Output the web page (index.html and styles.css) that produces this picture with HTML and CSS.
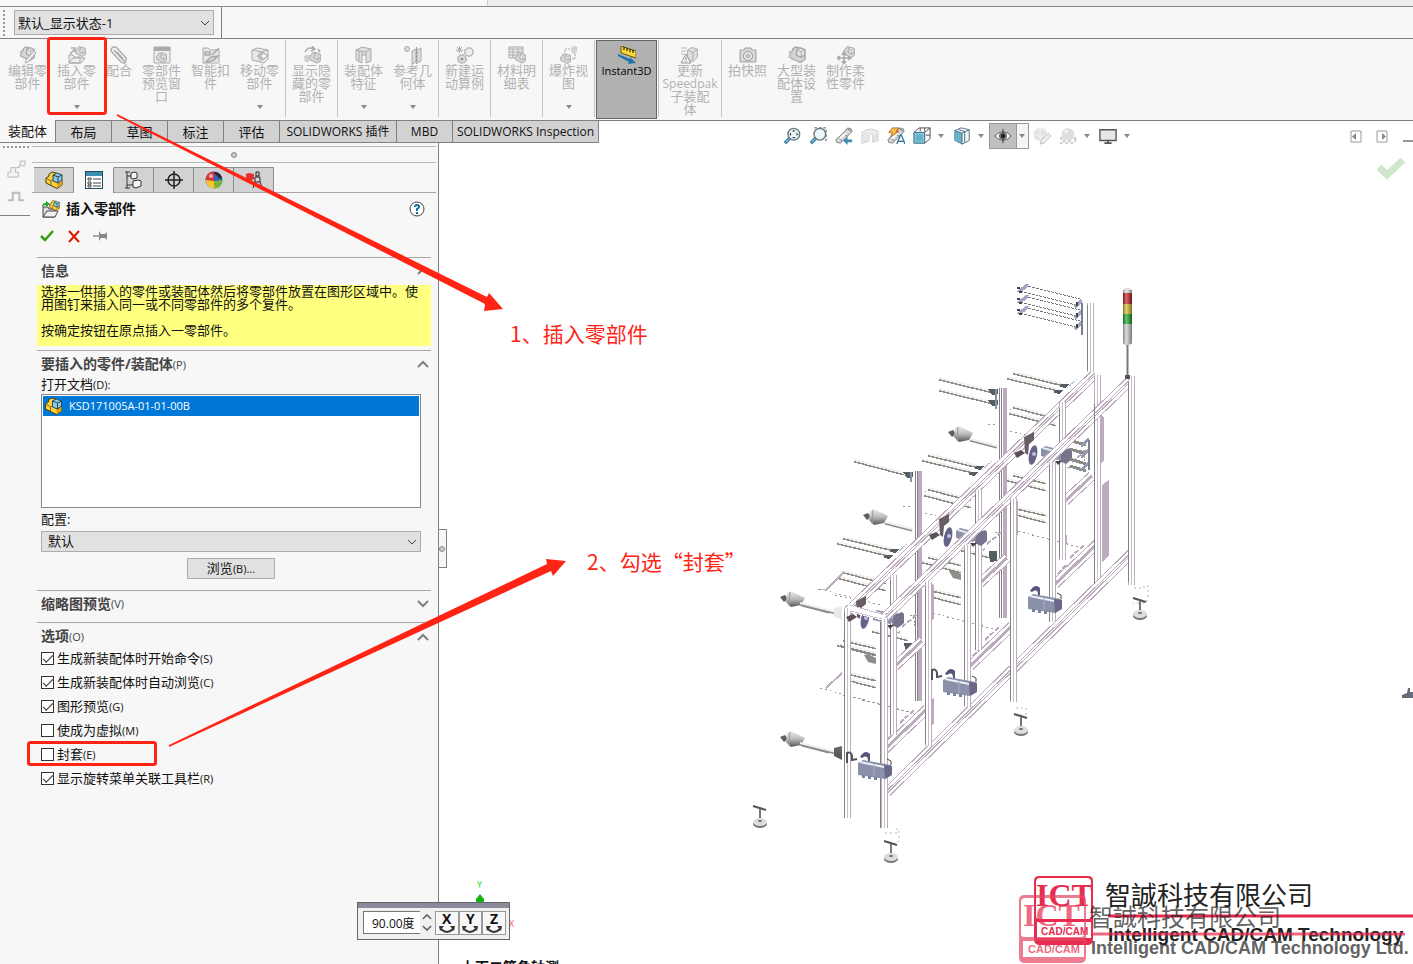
FILE: index.html
```html
<!DOCTYPE html>
<html lang="zh-CN">
<head>
<meta charset="utf-8">
<title>插入零部件</title>
<link rel="stylesheet" href="styles.css">
</head>
<body>
<svg class="defs" width="0" height="0" aria-hidden="true">
  <defs>
    <symbol id="i-part" viewBox="0 0 18 18"><path d="M1 7l3-2V3l3-2 4 1v8l6-1v5l-5 3.500L1 12z" fill="#ffd23c" stroke="#4b3a10"/><path d="M12 12.500l5-3V14l-5 3z" fill="#e0a010"/><path d="M1 7l5 3v4M6 10l3-2" fill="none" stroke="#8a6a10"/><path d="M8 4l4-2 5 2v5l-4 3-5-2z" fill="#8fc8e0" stroke="#1f4a5c"/><path d="M8 4l5 2 4-2M13 6v6" fill="none" stroke="#1f4a5c"/></symbol>
    <symbol id="g-cube" viewBox="0 0 18 18"><path d="M4 4l5-3 6 2v9l-5 5-6-3z" fill="#dedede" stroke="#a9a9a9"/><path d="M4 4l6 3 5-4M10 7v10" fill="none" stroke="#a9a9a9"/></symbol>
    <symbol id="g-part" viewBox="0 0 18 18"><path d="M1 7l3-2V3l3-2 4 1v8l6-1v5l-5 3.500L1 12z" fill="#d6d6d6" stroke="#a8a8a8" stroke-width="1.500"/><path d="M8 4l4-2 5 2v5l-4 3-5-2z" fill="#e4e4e4" stroke="#a8a8a8" stroke-width="1.500"/><path d="M8 4l5 2 4-2M13 6v6" fill="none" stroke="#b0b0b0"/></symbol>
    <symbol id="i-lens" viewBox="0 0 20 20"><path d="M2 18l6-6" stroke="#4688a4" stroke-width="4"/><path d="M3 17l4-4" stroke="#9bd0e4" stroke-width="1"/><circle cx="12" cy="8" r="6.500" fill="#edf6f9" stroke="#68787e" stroke-width="1.500"/></symbol>
    <symbol id="i-scope" viewBox="0 0 20 20"><path d="M1 14l8-7 5-6 4 1 1 3-5 5-8 8-4-1z" fill="#d8d8d8" stroke="#777"/><path d="M9 7l5 4M4 12l4 4M14 2l4 3" stroke="#666"/><path d="M5 13l7-6" stroke="#fff" stroke-width="2"/></symbol>
    <symbol id="i-down" viewBox="0 0 6 4"><path d="M0 0h6L3 4z" fill="#8a8a8a"/></symbol>
    <symbol id="i-chev" viewBox="0 0 12 8"><path d="M1 1l5 5 5-5" fill="none" stroke="currentColor" stroke-width="2"/></symbol>
    <symbol id="i-turn" viewBox="0 0 18 9"><path d="M3 4q6 6 12 0" fill="none" stroke="#333" stroke-width="2"/><path d="M1 1h5L2 6zM17 1h-5l4 5z" fill="#333"/></symbol>
  </defs>
</svg>

<div class="app">
  <div class="strip"></div>
  <div class="statebar">
    <span class="grip-v"></span>
    <span class="pick state-pick"><select aria-label="显示状态"><option>默认_显示状态-1</option></select><svg class="pick-arrow" viewBox="0 0 10 6"><path d="M1 1l4 4 4-4" fill="none" stroke="#444"/></svg></span>
  </div>

  <div class="ribbon">
    <button class="cmd"><svg class="ico" viewBox="0 0 18 18"><use href="#g-part" width="17" height="15"/><path d="M15 5l2 2-8 9-3 1 1-3z" fill="#eee" stroke="#aaa"/></svg><span>编辑零<br>部件</span></button>
    <button class="cmd"><svg class="ico" viewBox="0 0 18 18"><use href="#g-part" x="7" width="11" height="11"/><path d="M1 17V9h4l1 2h6v6zM1 17l4-5h12l-4 5z" fill="#eee" stroke="#aaa"/><path d="M2 8l5-5M3 2h4v4" fill="none" stroke="#aaa" stroke-width="1.500"/></svg><span>插入零<br>部件</span><svg class="drop"><use href="#i-down"/></svg></button>
    <button class="cmd narrow"><svg class="ico" viewBox="0 0 18 18"><path d="M4 4l9 10q2 2 3 0t-1-3L7 2Q4 0 2 2t0 4l9 10q3 2 5 0M7 6l6 7" fill="none" stroke="#aaa" stroke-width="1.500"/></svg><span>配合</span></button>
    <button class="cmd"><svg class="ico" viewBox="0 0 18 18"><path d="M1 1h16v16H1z" fill="#eee" stroke="#aaa"/><path d="M1 2h16M1 4h16" stroke="#aaa" stroke-width="2"/><use href="#g-part" x="3" y="6" width="11" height="11"/></svg><span>零部件<br>预览窗<br>口</span></button>
    <button class="cmd"><svg class="ico" viewBox="0 0 18 18"><path d="M1 17V2h5l2 2h9v13z" fill="#e8e8e8" stroke="#aaa"/><path d="M3 6h5v3H3zM4 16l5-5 7-1-4 4-6 2zM10 9l7-7" fill="#ddd" stroke="#aaa" stroke-width="1.500"/></svg><span>智能扣<br>件</span></button>
    <button class="cmd"><svg class="ico" viewBox="0 0 18 18"><path d="M1 4l5-2 11 2v9l-4 4-12-3z" fill="#e8e8e8" stroke="#aaa"/><path d="M1 4l10 2 6-2M9 6v9" fill="none" stroke="#aaa"/><path d="M7 9h4V6l6 4-6 4v-3H7z" fill="#f7f7f7" stroke="#999"/></svg><span>移动零<br>部件</span><svg class="drop"><use href="#i-down"/></svg></button>
    <i class="sep"></i>
    <button class="cmd"><svg class="ico" viewBox="0 0 18 18"><use href="#g-part" x="6" y="5" width="12" height="13"/><use href="#g-cube" x="0" y="8" width="8" height="9"/><path d="M2 6q3-6 9-3M9 0l3 3-4 2M15 3l2 3" fill="none" stroke="#aaa" stroke-width="1.500"/></svg><span>显示隐<br>藏的零<br>部件</span></button>
    <i class="sep"></i>
    <button class="cmd"><svg class="ico" viewBox="0 0 18 18"><path d="M1 4l6-3 9 2v12l-5 2V9H7v8l-6-3z" fill="#dedede" stroke="#aaa"/><path d="M1 4l9 2 6-3M7 9V6M11 9V6M4 5v10" fill="none" stroke="#aaa"/></svg><span>装配体<br>特征</span><svg class="drop"><use href="#i-down"/></svg></button>
    <button class="cmd"><svg class="ico" viewBox="0 0 18 18"><circle cx="3" cy="3" r="2.500" fill="#ddd" stroke="#aaa"/><path d="M8 5l4-2v13l-4 2zM13 4l4-2v13l-4 2z" fill="#ddd" stroke="#aaa"/><path d="M12.500 1v17" stroke="#999" stroke-dasharray="3 1"/></svg><span>参考几<br>何体</span><svg class="drop"><use href="#i-down"/></svg></button>
    <i class="sep"></i>
    <button class="cmd"><svg class="ico" viewBox="0 0 18 18"><circle cx="13" cy="6" r="4" fill="#eee" stroke="#bbb"/><circle cx="13" cy="6" r="4.500" fill="none" stroke="#aaa" stroke-dasharray="2 1"/><circle cx="6" cy="13" r="4" fill="#ddd" stroke="#bbb"/><circle cx="6" cy="13" r="4.500" fill="none" stroke="#aaa" stroke-dasharray="2 1"/><circle cx="6" cy="13" r="1.500" fill="#999"/><path d="M0 4h7M3.500 0v7M1 1l5 5M6 1L1 6" stroke="#aaa"/></svg><span>新建运<br>动算例</span></button>
    <i class="sep"></i>
    <button class="cmd"><svg class="ico" viewBox="0 0 18 18"><path d="M1 1h14v11H1z" fill="#eee" stroke="#aaa"/><path d="M1 3h14M1 6h14M1 9h14M5 3v9M10 3v9" stroke="#aaa"/><use href="#g-part" x="7" y="6" width="11" height="12"/></svg><span>材料明<br>细表</span></button>
    <i class="sep"></i>
    <button class="cmd"><svg class="ico" viewBox="0 0 18 18"><use href="#g-part" x="0" y="7" width="11" height="11"/><use href="#g-cube" x="10" width="8" height="8"/><path d="M5 6V3h5M15 8v5h-3" fill="none" stroke="#aaa" stroke-dasharray="2 1"/></svg><span>爆炸视<br>图</span><svg class="drop"><use href="#i-down"/></svg></button>
    <i class="sep"></i>
    <button class="cmd instant"><svg class="ico" viewBox="0 0 18 18"><path d="M3 0l15 5v7L3 7z" fill="#ffd83a" stroke="#6b5710"/><path d="M6 1v3M9 2v3M12 3v3M15 4v3" stroke="#000"/><path d="M0 8l12 5v-2l6 6-8 1 1-2L0 10z" fill="#1e74a8"/></svg><span>Instant3D</span></button>
    <i class="sep"></i>
    <button class="cmd wide"><svg class="ico" viewBox="0 0 18 18"><use href="#g-cube" x="3" width="16" height="17"/><path d="M0 2h6M0 5h5M0 8h4" stroke="#bbb"/><path d="M5 8l5 9H0z" fill="#eee" stroke="#999"/><path d="M5 11v3M5 15v1" stroke="#888"/></svg><span>更新<br><em>Speedpak</em><br>子装配<br>体</span></button>
    <i class="sep"></i>
    <button class="cmd"><svg class="ico" viewBox="0 0 18 18"><path d="M1 4h4l1-2h6l1 2h4v12H1z" fill="#d8d8d8" stroke="#a0a0a0"/><circle cx="9" cy="10" r="4.500" fill="#eee" stroke="#999"/><circle cx="9" cy="10" r="2" fill="#ccc" stroke="#aaa"/></svg><span>拍快照</span></button>
    <button class="cmd"><svg class="ico" viewBox="0 0 18 18"><use href="#g-part" x="1" width="17" height="17"/><path d="M0 5h5M1 8h7M0 11h7M3 14h6" stroke="#ccc"/></svg><span>大型装<br>配体设<br>置</span></button>
    <button class="cmd"><svg class="ico" viewBox="0 0 18 18"><use href="#g-part" x="6" width="12" height="12"/><path d="M7 7v10M1 12h12M5 9l2-3 2 3M5 15l2 3 2-3M3 10l-3 2 3 2M11 10l3 2-3 2" fill="none" stroke="#aaa" stroke-width="1.500"/></svg><span>制作柔<br>性零件</span></button>
  </div>

  <div class="tabrow">
    <nav class="tabs">
      <button class="tab active">装配体</button><button class="tab">布局</button><button class="tab">草图</button><button class="tab">标注</button><button class="tab">评估</button><button class="tab t-addin">SOLIDWORKS 插件</button><button class="tab">MBD</button><button class="tab t-insp">SOLIDWORKS Inspection</button>
    </nav>
    <div class="hud">
      <button class="hb" aria-label="整屏显示全图"><svg viewBox="0 0 20 20"><use href="#i-lens"/><path d="M12 3l2 2h-4zM12 13l2-2h-4zM7 8l2-2v4zM17 8l-2-2v4z" fill="#444"/></svg></button>
      <button class="hb" aria-label="局部放大"><svg viewBox="0 0 20 20"><path d="M6 1h13v14h-3" fill="none" stroke="#444" stroke-dasharray="3 2"/><use href="#i-lens"/></svg></button>
      <button class="hb" aria-label="上一视图"><svg viewBox="0 0 20 20"><use href="#i-scope"/><path d="M9 15l5-4v3h5v3h-5v3z" fill="#3d8bb0"/></svg></button>
      <button class="hb" aria-label="剖面视图"><svg viewBox="0 0 20 20"><path d="M1 6q9-7 18-1v10l-6 2V8q-2-1-4 1v7l-8 2z" fill="#eee" stroke="#ccc"/><path d="M2 10l5-4M2 14l5-5M3 17l5-5M14 12l4-4M14 15l4-4" stroke="#ccc"/></svg></button>
      <button class="hb" aria-label="动态注解视图"><svg viewBox="0 0 20 20"><use href="#i-scope"/><path d="M6 1h7l-3 4h3L4 11l2-5H2z" fill="#f5c04a" stroke="#b76424"/><path d="M11 19l4-10h1l4 10M12 16h6" fill="none" stroke="#2f7396" stroke-width="1.500"/></svg></button>
      <button class="hb" aria-label="视图定向"><svg viewBox="0 0 20 20"><path d="M1 6l6-5h12v12l-6 5" fill="#fff" stroke="#444"/><path d="M8 1v4M13 6l6-5M13 5V1M14 9h5" stroke="#444"/><path d="M1 6h12v12H1z" fill="#8ec9e0" stroke="#285d74"/><path d="M3 8h8v8H3z" fill="#69b0cd"/></svg></button>
      <svg class="hd"><use href="#i-down"/></svg>
      <button class="hb" aria-label="显示样式"><svg viewBox="0 0 20 20"><path d="M2 4l7-3 9 2v12l-8 4-8-4z" fill="#f2f8fa" stroke="#567"/><path d="M2 4l8 3v12l-8-4z" fill="#69b0cd"/><path d="M2 4l8 3 8-4M10 7v12M6 3l7 2v12" fill="none" stroke="#3c6878"/></svg></button>
      <svg class="hd"><use href="#i-down"/></svg>
      <span class="eye"><button class="hb" aria-label="隐藏/显示项目"><svg viewBox="0 0 20 20"><path d="M1 10q9-10 18 0-9 10-18 0z" fill="#fff" stroke="#555"/><circle cx="10" cy="10" r="4.500" fill="#777"/><circle cx="10" cy="10" r="2.500" fill="#222"/><path d="M10 2v16" stroke="#333"/></svg></button><svg class="hd eye-drop"><use href="#i-down"/></svg></span>
      <button class="hb" aria-label="编辑外观"><svg viewBox="0 0 20 20"><circle cx="8" cy="8" r="7.500" fill="#e2e2e2"/><path d="M3 4q5-4 9 0M1 8q7 5 14 0M8 1v14" fill="none" stroke="#f6f6f6"/><path d="M17 7l3 3-8 8-4 1 1-4z" fill="#eee" stroke="#bbb"/></svg></button>
      <button class="hb" aria-label="应用布景"><svg viewBox="0 0 20 20"><path d="M1 11h3v3H1zM7 11h3v3H7zM16 11h3v3h-3zM4 14h3v3H4zM10 14h3v3h-3zM1 17h3v2H1zM7 17h3v2H7zM13 17h3v2h-3zM17 14h2v3h-2z" fill="#ccc"/><circle cx="10" cy="8" r="7" fill="#dedede"/><circle cx="8" cy="5" r="2" fill="#f2f2f2"/></svg></button>
      <svg class="hd"><use href="#i-down"/></svg>
      <button class="hb" aria-label="视图设定"><svg viewBox="0 0 20 20"><path d="M1 3h18v12H1z" fill="#e6e6e6" stroke="#555" stroke-width="1.500"/><path d="M10 15v3M6 18h8" stroke="#555" stroke-width="2"/></svg></button>
      <svg class="hd"><use href="#i-down"/></svg>
    </div>
    <div class="winbtns">
      <button aria-label="左窗格"><svg viewBox="0 0 12 13"><path d="M1 1h10v11H1z" fill="#fff" stroke="#999"/><path d="M6 3v7L2 6.500z" fill="#888"/></svg></button>
      <button aria-label="右窗格"><svg viewBox="0 0 12 13"><path d="M1 1h10v11H1z" fill="#fff" stroke="#999"/><path d="M6 3v7l4-3.500z" fill="#888"/></svg></button>
      <button aria-label="最小化"><svg viewBox="0 0 12 13"><path d="M1 11h11" stroke="#999" stroke-width="2"/></svg></button>
    </div>
  </div>

  <div class="work">
    <aside class="side">
      <span class="grip-h"></span>
      <svg class="side-ico" viewBox="0 0 20 20"><path d="M1 18v-5h3V8h5v5h3v5zM9 8h4V5M14 1h5v5h-5z" fill="#f3f3f3" stroke="#bbb"/></svg>
      <svg class="side-ico" viewBox="0 0 20 20"><path d="M1 14h5V6h7v8h5" fill="none" stroke="#bbb" stroke-width="2"/></svg>
    </aside>

    <section class="manager">
      <div class="splitter"><i></i></div>
      <div class="mtabs">
        <button class="mtab" aria-label="设计树"><svg viewBox="0 0 18 18"><use href="#i-part"/></svg></button>
        <button class="mtab on" aria-label="属性"><svg viewBox="0 0 18 18"><path d="M0 0h18v18H0z" fill="#fff" stroke="#244c60" stroke-width="2"/><path d="M1 1h16v4H1z" fill="#3b90b4"/><path d="M3 7h3v2H3zM3 11h3v2H3zM3 14h3v2H3z" fill="none" stroke="#444"/><path d="M8 8h8M8 12h8M8 15h8" stroke="#444"/></svg></button>
        <button class="mtab" aria-label="配置"><svg viewBox="0 0 18 18"><path d="M2 1v16M0 1h5M0 17h5M2 5h6M2 14h6" fill="none" stroke="#333"/><path d="M6 2l4-1 2 1v5l-4 1-2-1zM8 10l5-1 3 1v5l-5 2-3-1z" fill="#f5f5f5" stroke="#333"/></svg></button>
        <button class="mtab" aria-label="尺寸专家"><svg viewBox="0 0 18 18"><circle cx="9" cy="9" r="6" fill="none" stroke="#222" stroke-width="1.500"/><path d="M9 0v18M0 9h18" stroke="#222" stroke-width="1.500"/></svg></button>
        <button class="mtab" aria-label="外观"><svg viewBox="0 0 18 18"><circle cx="9" cy="9" r="8.500" fill="#2d63b8"/><path d="M9 10V.5Q1 1 .5 9z" fill="#d33"/><path d="M.5 9L9 10l1 7.500Q2 18 .5 9z" fill="#f6c62a"/><path d="M9 10l8.500-1q0 7-7.500 8.500z" fill="#79b43c"/><path d="M9 1q7 0 8 7l-3-1-5-5z" fill="#3a2020"/><circle cx="6" cy="5" r="2" fill="#fff" opacity=".6"/></svg></button>
        <button class="mtab" aria-label="检查"><svg viewBox="0 0 18 18"><path d="M1 3l3-1 5 1v5l-3 2-5-3z" fill="#e23030"/><path d="M11 1h3v4h-3zM10 6h5v5l2 5M10 6v5l-2 6M10 11h5" fill="none" stroke="#222"/></svg></button>
      </div>
      <div class="pm">
        <header class="title">
          <svg class="title-ico" viewBox="0 0 18 18"><path d="M1 17V7h5l1 2h6v8z" fill="#ddd" stroke="#444"/><use href="#i-part" x="7" width="11" height="11"/><path d="M1 17l4-6h11l-3 6z" fill="#f1f1f1" stroke="#444"/><path d="M0 7q0-4 4-4V1l4 3-4 3V5q-2 0-4 2z" fill="#23a127"/></svg>
          <h1>插入零部件</h1>
          <button class="help" aria-label="帮助"><svg viewBox="0 0 16 16"><circle cx="8" cy="8" r="7" fill="#fff" stroke="#444"/><path d="M6 6q0-2 2-2t2 2q0 1-2 2v2M8 11v2" fill="none" stroke="#17719b" stroke-width="2"/></svg></button>
        </header>
        <div class="confirm">
          <button aria-label="确定"><svg viewBox="0 0 16 16"><path d="M2 8l4 4 8-9" fill="none" stroke="#2f9d12" stroke-width="2.500"/></svg></button>
          <button aria-label="取消"><svg viewBox="0 0 16 16"><path d="M3 3l10 11M13 3L3 14" fill="none" stroke="#dc1a00" stroke-width="2"/></svg></button>
          <button aria-label="保持可见"><svg viewBox="0 0 16 16"><path d="M0 8h7" stroke="#888" stroke-width="1.500"/><path d="M6 3l2 3h4l2-2v8l-2-2H8l-2 3z" fill="#888"/></svg></button>
        </div>

        <section class="group info">
          <h2>信息<svg class="chev up"><use href="#i-chev"/></svg></h2>
          <div class="note"><p>选择一供插入的零件或装配体然后将零部件放置在图形区域中。使用图钉来插入同一或不同零部件的多个复件。</p><p>按确定按钮在原点插入一零部件。</p></div>
        </section>

        <section class="group parts">
          <h2>要插入的零件/装配体<small>(P)</small><svg class="chev up"><use href="#i-chev"/></svg></h2>
          <div class="field">
            <span class="lbl" id="docs">打开文档<small>(D):</small></span>
            <ul class="list" role="listbox" aria-labelledby="docs"><li role="option" aria-selected="true"><svg viewBox="0 0 18 18"><use href="#i-part"/></svg>KSD171005A-01-01-00B</li></ul>
            <label class="lbl conf" for="conf">配置:</label>
            <span class="pick conf-pick"><select id="conf"><option>默认</option></select><svg class="pick-arrow" viewBox="0 0 10 6"><path d="M1 1l4 4 4-4" fill="none" stroke="#444"/></svg></span>
            <button class="browse">浏览<small>(B)...</small></button>
          </div>
        </section>

        <section class="group thumb"><h2>缩略图预览<small>(V)</small><svg class="chev"><use href="#i-chev"/></svg></h2></section>

        <section class="group opts">
          <h2>选项<small>(O)</small><svg class="chev up"><use href="#i-chev"/></svg></h2>
          <label><input type="checkbox" checked><span>生成新装配体时开始命令<small>(S)</small></span></label>
          <label><input type="checkbox" checked><span>生成新装配体时自动浏览<small>(C)</small></span></label>
          <label><input type="checkbox" checked><span>图形预览<small>(G)</small></span></label>
          <label><input type="checkbox"><span>使成为虚拟<small>(M)</small></span></label>
          <label><input type="checkbox"><span>封套<small>(E)</small></span></label>
          <label><input type="checkbox" checked><span>显示旋转菜单关联工具栏<small>(R)</small></span></label>
        </section>
      </div>
    </section>

    <main class="view">
      <svg class="scene" viewBox="439 143 974 821" width="974" height="821">
        <defs>
          <linearGradient id="metal" x1="0" x2="0" y1="0" y2="1"><stop offset="0" stop-color="#eee"/><stop offset=".5" stop-color="#bbb"/><stop offset="1" stop-color="#555"/></linearGradient>
          <linearGradient id="shine" x1="0" x2="1"><stop offset="0" stop-color="#000" stop-opacity=".35"/><stop offset=".35" stop-color="#fff" stop-opacity=".35"/><stop offset="1" stop-color="#000" stop-opacity=".4"/></linearGradient>
          <g id="spool"><path d="M970 440l27 7" class="rodD"/><path d="M970 439l27 7" class="rodL"/><path d="M948 432l5-2 3 4-4 3z" fill="#566065"/><path d="M955 428l4-2 14 7-4 7-10 2-5-5z" fill="url(#metal)"/><path d="M958 427l-1 14" stroke="#999"/></g>
          <g id="rods">
            <path class="rodD" d="M1013 373l50 12M1007 378l50 12M1013 407l43 11M1009 413l47 12M1013 475l33 8M1007 480l39 10M1015 508l31 7M1015 514l31 8"/>
            <path class="rodL" d="M1013 372l50 12M1007 377l50 12M1013 406l43 11M1009 412l47 12M1013 474l33 8M1007 479l39 10M1015 507l31 7M1015 513l31 8"/>
            <path d="M1061 384l8 0-3 4-6-1zM1055 390l8 0-3 4-6-1z" fill="#555f63"/>
            <path d="M1006 414l7-7M988 424h7M1005 430l28 7M1013 530l70 18" stroke="#999" fill="none" stroke-dasharray="2 3"/>
            <path d="M1067 388l10-9" stroke="#acb9dd" stroke-dasharray="2 1"/>
          </g>
          <g id="drive"><path d="M1024 437l10-5v8l-5 4-1 11-3-2z" fill="#685d68"/><path d="M1014 453l7-3 4 3-8 5z" fill="#5b4e58"/><ellipse cx="1033" cy="455" rx="4" ry="10" fill="#66638a" transform="rotate(12 1033 455)"/><circle cx="1034" cy="454" r="2" fill="#bcc0dc"/><path d="M1041 449l4-3 17 4v7l-4 3-17-4z" fill="#8c91aa"/><path d="M1043 448l18 5" stroke="#e3e8f8" stroke-width="2"/><path d="M1062 451l8-3 2 2v9l-6 5-6-3z" fill="#77738f"/><path d="M1055 461l7 0-4 4z" fill="#444"/></g>
          <g id="motor"><path d="M1030 591q5-8 10-3v7h-2q0-7-6-3z" fill="#56557c"/><path d="M1028 597l5-3 28 5v10l-6 4-27-4z" fill="#8c91aa"/><path d="M1030 595l24 5v2l-24-5z" fill="#eef2fa"/><path d="M1044 598v12" stroke="#a9aec4"/><path d="M1054 599l8 1v9l-7 4z" fill="#6b6788"/><path d="M1032 609h3v3h-3zM1038 610h3v3h-3zM1044 611h3v3h-3z" fill="#7d829b"/><path d="M1057 593l4 2v4" stroke="#444" fill="none"/></g>
          <path id="inner-path" d="M1065 501l27-25M1055 584l42-40"/>
          <g id="inner"><use href="#inner-path" class="b1"/><use href="#inner-path" class="b2"/><use href="#inner-path" class="b3"/><path d="M1062 472l8-5M1072 462l16-13M1070 558l15-14M1058 574l8-9" class="lav" stroke-dasharray="5 2"/><path d="M1061 540l6-6v10l-6 5z" fill="#bcaabd"/><path d="M1070 455v6M1080 450h6M1084 456v6" stroke="#999" stroke-dasharray="2 1"/></g>
          <g id="rack"><path d="M1020 291l56 14M1028 286l52 13" stroke="#777" stroke-dasharray="3 1"/><path d="M1018 290l8-6 3 0-2 4-6 4-4 0zM1073 306l8-8 1 4-6 6z" fill="#a2a9c4"/><path d="M1017 288h3M1019 292h3M1077 302v4" stroke="#444" stroke-width="2"/></g>
          <g id="foot"><path d="M0-16l13 4" stroke="#555" stroke-width="2"/><path d="M7-13v12" stroke="#777" stroke-width="2"/><ellipse cx="7" cy="2" rx="7" ry="4" fill="#777"/><ellipse cx="7" cy="0" rx="7" ry="4" fill="#ddd"/><ellipse cx="7" cy="-1" rx="2" ry="1" fill="#666"/></g>
          <path id="back-rail" d="M848 611L1095 374"/>
          <path id="back-post" d="M847.500 608V818M893.500 575V735M978.500 490V650M1062.500 402V560M1090.500 303V372M1097.500 375V585"/>
          <path id="front-rail" d="M884 618L1131 380M887 792L1131 554"/>
          <path id="front-post" d="M884.500 618V828M928.500 582V746M967.500 545V707M1013.500 498V702M1052.500 462V622M1131.500 376V585"/>
          <path id="tall" d="M917.500 470V702M1002.500 387V620"/>
        </defs>
        <g class="crisp">
        <use href="#rack"/><use href="#rack" y="11"/><use href="#rack" y="22"/>
        <path d="M1082 303v32" stroke="#77808f" stroke-width="2"/>
        <path class="rodD" d="M939 379l53 13M939 390l53 13M854 461l50 13M957 549l36 9M872 631l36 9"/><path class="rodL" d="M939 378l53 13M939 389l53 13M854 460l50 13M957 548l36 9M872 630l36 9"/>
        <path d="M988 389h10v5l-6 1zM988 400h10v5l-6 1zM903 472h10v5l-6 1zM989 551h8v10l-7 1zM904 643h8v5l-7 1z" fill="#555f63"/><path d="M996 389v20M911 472v10" stroke="#8891a5" stroke-width="2"/>
        <use href="#rods"/><use href="#rods" x="-85" y="82"/><use href="#rods" x="-170" y="165"/>
        <path d="M826 590l18-18M826 688l16-15" class="lav"/>
        <path d="M820 589l60 16M820 688l100 27" stroke="#999" stroke-dasharray="2 3"/>
        <path class="rodD" d="M840 645l36 9"/><path class="rodL" d="M840 644l36 9"/>
        </g>
        <path d="M864 655l4-1 8 4v6l-8-2zM949 571l4-1 8 4v6l-8-2z" fill="#8d8d8a"/>
        <use href="#spool"/><use href="#spool" x="-85" y="83"/><use href="#spool" x="-168" y="165"/><use href="#spool" x="-168" y="305"/>
        <path d="M800 604l36 9M800 744l36 9" class="rodD"/><path d="M800 603l36 9M800 743l36 9" class="rodL"/><path d="M834 608l8-2v14l-8-4zM834 748l8-2v14l-8-4z" fill="url(#metal)"/>
        <g class="crisp">
        <path d="M915 470h6v232h-6zM999 387h7v232h-7z" fill="#fff"/><path d="M920 471v230M1005 388v230" class="solid"/><path d="M915.500 471v230M917.500 471v230M999.500 388v230M1001.500 388v230" class="edge"/>
        <use href="#inner"/><use href="#inner" x="-85" y="82"/><use href="#inner" x="-170" y="165"/>
        <path d="M1102 485l7-5v76l-7 6zM1101 415l3 2v44l-3 2zM1015 499l3 2v34l-3 2zM931 583l3 2v34l-3 2zM931 700l3-3v27l-3 2z" fill="#bcaabd"/>
        <use href="#back-rail" class="b1"/><use href="#back-rail" class="b2"/><use href="#back-rail" class="b3"/><use href="#back-rail" class="b4"/>
        <use href="#back-post" class="p1"/><use href="#back-post" class="p2"/><use href="#back-post" class="p3"/>
        <path class="edge" d="M844.500 612v206M890.500 580v155M975.500 494v156M1059.500 408v150M1087.500 305v65"/>
        </g>
        <use href="#drive"/><use href="#drive" x="-85" y="82"/><use href="#drive" x="-168" y="164"/>
        <g class="crisp"><path d="M1072 441l14 4M1070 449l16 5M1070 459l16 5M1070 466l16 5" class="rodD"/><path d="M1081 446l8-7M1081 457l8-7M1081 470l8-7" stroke="#9299b5" stroke-width="3"/><path d="M1089 440v30" stroke="#77808f" stroke-width="2"/></g>
        <g class="crisp">
        <use href="#front-rail" class="b1"/><use href="#front-rail" class="b2"/><use href="#front-rail" class="b3"/><use href="#front-rail" class="b4"/>
        <use href="#front-post" class="p1"/><use href="#front-post" class="p2"/><use href="#front-post" class="p3"/>
        <path class="edge" d="M880.500 622v206M925.500 586v158M964.500 549v156M1010.500 502v198M1049.500 466v156M1128.500 382v200M1094.500 404v180"/>
        <path d="M848 604l38 11-2 6-34-9z" fill="#fff"/><path d="M850 605l34 10M850 611l32 8" stroke="#cbbccd" stroke-dasharray="4 1"/>
        </g>
        <use href="#motor"/><use href="#motor" x="-85" y="83"/><use href="#motor" x="-170" y="166"/>
        <path d="M932 680v-10q4-2 5 3v4l5-1M847 763v-10q4-2 5 3v4l5-1" fill="none" stroke="#56505c" stroke-width="2"/>
        <path d="M1134 588h10v-2h4v14l-4 3h-11M1016 708h10v6l-10 2M885 833h12v-4h2v12l-6 3" fill="none" stroke="#bcaabd" stroke-dasharray="2 3"/>
        <use href="#foot" x="1133" y="614"/><use href="#foot" x="1014" y="730"/><use href="#foot" x="753" y="822"/><use href="#foot" x="884" y="857"/>
        <path d="M1127.500 344v32" stroke="#777" stroke-width="2"/><path d="M1125 375h5v4h-5z" fill="#555"/>
        <path d="M1123 290q4-5 9 0v3h-9z" fill="#ddd"/><path d="M1123 293h9v11h-9z" fill="#c01818"/><path d="M1123 304h9v10h-9z" fill="#d2bd28"/><path d="M1123 314h9v10h-9z" fill="#16a024"/><path d="M1123 324h9v18l-2 3h-5l-2-3z" fill="#ccc"/><path d="M1123 290h9v54h-9z" fill="url(#shine)"/>
        <path d="M1402 695l5-2 1-5h2v4h3v6h-11z" fill="#666c7c"/>
        <path d="M480 894l4 5v5h-8v-5z" fill="#12b312"/>
        <text x="477" y="888" class="axis" fill="#11e011">Y</text><text x="509" y="927" class="axis" fill="#f55">X</text>
      </svg>
      <svg class="accept" viewBox="0 0 30 24"><path d="M3 11l8 8L27 4" fill="none" stroke="#cfe7cb" stroke-width="7"/></svg>
      <button class="handle" aria-label="折叠面板"><i></i></button>
      <div class="viewname">上下二等角轴测</div>
      <svg class="brand" viewBox="1013 870 400 94" width="400" height="94">
        <g><path d="M1039 876h49q5 0 5 5v58q0 6-6 6h-47q-6 0-6-6v-58q0-5 5-5z" fill="#e62c4f"/><path d="M1040 878h47q4 0 4 4v34q0 3-3 3h-49q-3 0-3-3v-34q0-4 4-4z" fill="#fff"/><path d="M1037 922h54v16h-54z" fill="#fff"/><text x="1036" y="906" class="ict">ICT</text><text x="1041" y="935" class="cad">CAD/CAM</text></g>
        <text x="1105" y="905" class="cn1">智誠科技有限公司</text><path d="M1108 916h305" stroke="#e6284c" stroke-width="3"/>
        <text x="1108" y="941" class="en1">Intelligent CAD/CAM Technology</text>
        <g opacity=".7"><path d="M1025 895h56q5 0 5 5v57q0 6-6 6h-55q-6 0-6-6v-57q0-5 6-5zM1025 898q-4 0-4 4v32q0 3 3 3h57q3 0 3-3v-32q0-4-4-4zM1023 941v16h61v-16z" fill="#e84562" fill-rule="evenodd"/><text x="1023" y="926" class="ict">ICT</text><text x="1028" y="953" class="cad cad2">CAD/CAM</text><text x="1089" y="926" class="cn2">智誠科技有限公司</text><path d="M1091 934h314" stroke="#e6284c" stroke-width="3"/><text x="1091" y="954" class="en2">Intelligent CAD/CAM Technology Ltd.</text></g>
      </svg>
    </main>

    <div class="spin">
      <div class="spin-bar"></div>
      <div class="spin-body">
        <input type="text" value="90.00度" aria-label="旋转角度">
        <span class="steps"><button aria-label="增加"><svg class="up" viewBox="0 0 12 8"><use href="#i-chev"/></svg></button><button aria-label="减少"><svg viewBox="0 0 12 8"><use href="#i-chev"/></svg></button></span>
        <button class="axisbtn">X<svg><use href="#i-turn"/></svg></button><button class="axisbtn">Y<svg><use href="#i-turn"/></svg></button><button class="axisbtn">Z<svg><use href="#i-turn"/></svg></button>
      </div>
    </div>
  </div>

  <svg class="marks" viewBox="0 0 760 800" width="760" height="800">
    <rect x="48.500" y="38.500" width="57" height="75" rx="2"/><rect x="28.500" y="742.500" width="127" height="22" rx="2"/>
    <path d="M117 114L487 297 489 293 503 309 484 311 485 304 117 116z"/><path d="M169 745L547 564 546 559 566 561 553 576 551 571 169 747z"/>
    <text x="510" y="342">1、插入零部件</text><text x="587" y="570">2、勾选“封套”</text>
  </svg>
</div>
</body>
</html>
```
FILE: styles.css
```css
* { box-sizing: border-box; }
body { margin: 0; background: #f7f7f7; color: #111; font: 13px/16px "Open Sans", "Noto Sans CJK SC", sans-serif; }
button, input, select { font: inherit; color: inherit; }
button { background: none; border: 0; padding: 0; }
small { font-size: 11px; font-weight: 400; }
em { font-style: normal; font-size: 12px; }
h1, h2, p, ul { margin: 0; padding: 0; }
svg { display: block; }
.defs { position: absolute; }
.app { position: relative; display: flex; flex-direction: column; min-height: 100vh; overflow: hidden; }

.strip { height: 7px; border-bottom: 1px solid #8a8a8a; background: linear-gradient(90deg, #f7f7f7 487px, #ccc 487px, #ccc 488px, #ededed 488px); }
.statebar { display: flex; align-items: center; height: 32px; border-bottom: 1px solid #808080; padding-left: 3px; }
.grip-v { width: 4px; height: 26px; background: repeating-linear-gradient(#999 0 2px, transparent 2px 4px) 0 0 / 2px 100% no-repeat; }
.pick { position: relative; display: block; }
.pick select { display: block; width: 100%; height: 100%; appearance: none; border: 1px solid #adadad; border-radius: 0; background: #e1e1e1; padding: 0 3px; }
.pick-arrow { position: absolute; right: 4px; top: 50%; width: 10px; height: 6px; margin-top: -3px; pointer-events: none; }
.state-pick { width: 200px; height: 25px; margin-left: 7px; }
.statebar::after { content: ""; align-self: stretch; margin-left: 7px; border-left: 1px solid #808080; }

.ribbon { display: flex; height: 82px; padding-left: 3px; border-bottom: 1px solid #808080; }
.cmd { display: flex; flex-direction: column; align-items: center; width: 49px; padding: 7px 0 11px; color: #b2b2b2; line-height: 13px; text-align: center; white-space: nowrap; }
.cmd .ico { width: 18px; height: 18px; flex: none; }
.cmd.narrow { width: 36px; }
.cmd.wide { width: 60px; }
.cmd.instant { width: 61px; height: 79px; margin-top: 1px; padding-top: 5px; border: 1px solid #666; background: #b1b1b1; color: #000; font-size: 11px; }
.drop { width: 6px; height: 4px; margin-top: auto; }
.sep { width: 1px; margin: 1px 1px 3px; background: #c4c4c4; flex: none; }

.tabrow { position: relative; z-index: 1; display: flex; align-items: flex-start; height: 22px; background: #fff; }
.tabs { display: flex; height: 22px; border-bottom: 1px solid #808080; }
.tab { width: 56px; border-right: 1px solid #7f7f7f; background: #d2d2d2; font-size: 13px; line-height: 20px; white-space: nowrap; }
.tab.active { margin-top: -1px; background: #f7f7f7; }
.tab.t-addin { width: 117px; }
.tab.t-insp { width: 146px; }
.t-addin, .t-insp, .tab:nth-child(7) { font-size: 12px; }
.hud { display: flex; align-items: center; height: 26px; margin: 2px 0 0 180px; }
.hb { display: grid; place-items: center; width: 26px; height: 26px; }
.hb svg { width: 18px; height: 18px; }
.hd { width: 6px; height: 4px; margin: 0 5px 0 3px; }
.eye { display: flex; align-items: center; border: 1px solid #999; background: linear-gradient(90deg, #c0c0c0 26px, #999 26px, #999 27px, #f5f5f5 27px); }
.eye .hb { height: 24px; }
.eye-drop { margin: 0 3px 0 3px; }
.winbtns { display: flex; gap: 14px; margin: 9px 0 0 auto; }
.winbtns svg { width: 12px; height: 13px; }
.winbtns button:last-child { width: 11px; overflow: hidden; }

.work { position: relative; display: flex; flex: 1; }
.side { display: flex; flex-direction: column; align-items: center; gap: 8px; width: 30px; height: 73px; padding-top: 3px; border-bottom: 1px solid #808080; }
.grip-h { width: 27px; height: 2px; margin-left: 3px; background: repeating-linear-gradient(90deg, #999 0 2px, transparent 2px 4px); }
.side-ico { width: 19px; height: 19px; margin-left: 3px; }
.side-ico:nth-of-type(1) { margin-top: 4px; }
.manager { width: 409px; padding-left: 2px; border-right: 1px solid #808080; }
.splitter { display: grid; place-items: center; width: 404px; height: 17px; margin-top: 3px; border: solid #bbb; border-width: 1px 0; }
.splitter i, .handle i { width: 6px; height: 6px; border: 1px solid #888; border-radius: 50%; background: #ccc; }
.mtabs { display: flex; width: 404px; height: 26px; margin-top: 4px; padding-left: 2px; border-bottom: 1px solid #a5a5a5; }
.mtab { display: grid; place-items: center; width: 40px; border: solid #8c8c8c; border-width: 1px 1px 0 0; background: #d2d2d2; }
.mtab svg { width: 18px; height: 18px; }
.mtab.on { background: #f7f7f7; margin-bottom: -1px; padding-bottom: 1px; border-top-color: #f7f7f7; }
.pm { width: 399px; padding-left: 5px; }
.title { display: flex; align-items: center; height: 32px; padding: 0 6px 0 5px; }
.title-ico { width: 18px; height: 18px; margin-right: 6px; }
.title h1 { flex: 1; font-size: 14px; line-height: 18px; }
.help svg { width: 16px; height: 16px; }
.confirm { display: flex; gap: 11px; padding: 3px 0 13px 2px; }
.confirm svg { width: 16px; height: 16px; }
.group { border-top: 1px solid #a8a8a8; }
.group h2 { display: flex; align-items: center; height: 27px; padding: 0 2px 2px 4px; color: #444; font-size: 14px; font-weight: 700; line-height: 18px; }
.group h2 small { margin-top: 1px; }
.chev { width: 12px; height: 8px; margin-left: auto; color: #808080; }
.up { transform: rotate(180deg); }
.note { height: 61px; background: #ffff80; padding: 0 4px; line-height: 13px; }
.note p + p { margin-top: 13px; }
.info { padding-bottom: 4px; }
.field { display: flex; flex-direction: column; padding: 0 10px 11px 4px; }
.parts h2 { height: 26px; padding-bottom: 0; }
.lbl { height: 17px; line-height: 15px; }
.list { height: 114px; padding: 1px; border: 1px solid #828790; background: #fff; list-style: none; }
.list li { display: flex; align-items: center; gap: 6px; height: 20px; padding-left: 1px; background: #0078d7; color: #fff; font-size: 11px; }
.list svg { width: 19px; height: 18px; }
.conf { height: 23px; padding-top: 4px; }
.conf-pick { height: 21px; }
.conf-pick select { padding-left: 6px; line-height: 17px; }
.browse { align-self: center; width: 88px; height: 21px; margin-top: 6px; border: 1px solid #adadad; background: #e1e1e1; line-height: 18px; }
.thumb { padding-bottom: 4px; }
.opts label { display: flex; align-items: center; gap: 3px; height: 24px; padding-left: 4px; }
.opts .up { margin-top: 2px; }
.opts h2 { height: 23px; padding: 3px 2px 0 4px; }
.opts input { display: grid; place-items: center; width: 13px; height: 13px; margin: 0; appearance: none; border: 1px solid #333; background: #fff; }
.opts input:checked::before { content: ""; width: 9px; height: 4px; border: solid #333; border-width: 0 0 1px 1px; transform: translateY(-1px) rotate(-45deg); }

.view { position: relative; flex: 1; min-width: 0; overflow: hidden; background: #fff; }
.scene { position: absolute; left: 0; top: 0; }
.crisp { shape-rendering: crispEdges; }
.b1 { fill: none; stroke: #bcaabd; stroke-width: 10; }
.b2 { fill: none; stroke: #fff; stroke-width: 8; }
.b3 { fill: none; stroke: #bcaabd; stroke-width: 3; }
.b4 { fill: none; stroke: #fff; stroke-width: 1; }
.p1 { fill: none; stroke: #bcaabd; stroke-width: 7; }
.p2 { fill: none; stroke: #fff; stroke-width: 5; }
.p3 { fill: none; stroke: #c9bccb; stroke-width: 1; }
.solid { stroke: #bcaabd; stroke-width: 4; }
.edge { fill: none; stroke: #828282; }
.lav { fill: none; stroke: #bcaabd; stroke-width: 2; }
.rodD { fill: none; stroke: #8b8b87; stroke-width: 3; }
.rodL { fill: none; stroke: #f0f0ec; stroke-width: 2; }
.axis { font-size: 9px; }
.accept { position: absolute; right: 7px; top: 13px; width: 30px; height: 24px; }
.handle { position: absolute; left: -1px; top: 386px; display: grid; place-items: center; width: 9px; height: 39px; border: 1px solid #808080; border-left: 0; background: #f7f7f7; }
.viewname { position: absolute; left: 22px; bottom: -11px; font-size: 14px; font-weight: 700; }
.brand { position: absolute; right: 0; bottom: 0; }
.ict { font: 700 32px "Liberation Serif", serif; fill: #e62c4f; }
.cad { font: 700 10px "Liberation Sans", sans-serif; fill: #e62c4f; }
.cad2 { font-size: 11px; }
.cn1 { font: 400 26px "Noto Sans CJK TC", sans-serif; fill: #222; }
.cn2 { font: 400 24px "Noto Sans CJK TC", sans-serif; fill: #222; }
.en1 { font: 700 19px "Liberation Sans", sans-serif; fill: #222; }
.en2 { font: 700 18px "Liberation Sans", sans-serif; fill: #222; }

.spin { position: absolute; left: 357px; bottom: 24px; width: 153px; border: 1px solid #666; background: #f0f0f0; }
.spin-bar { height: 5px; background: #8a8a9a; }
.spin-body { display: flex; height: 31px; padding: 3px 3px 5px 5px; }
.spin input { width: 57px; height: 23px; border: 1px solid #777; border-right: 0; padding: 0 6px 0 8px; background: #fff; font-size: 12px; }
.steps { display: flex; flex-direction: column; justify-content: space-around; width: 15px; align-items: center; color: #666; }
.steps svg { width: 10px; height: 7px; }
.axisbtn { display: flex; flex-direction: column; align-items: center; width: 24px; height: 24px; border: 1px solid #999; background: #f7f7f7; font-size: 14px; font-weight: 700; line-height: 13px; }
.axisbtn svg { width: 18px; height: 9px; }

.marks { position: absolute; left: 0; top: 0; z-index: 2; pointer-events: none; fill: #ff2414; }
.marks rect { fill: none; stroke: #ff2414; stroke-width: 3; }
.marks text { font: 21px "Noto Sans CJK SC", sans-serif; }
```
